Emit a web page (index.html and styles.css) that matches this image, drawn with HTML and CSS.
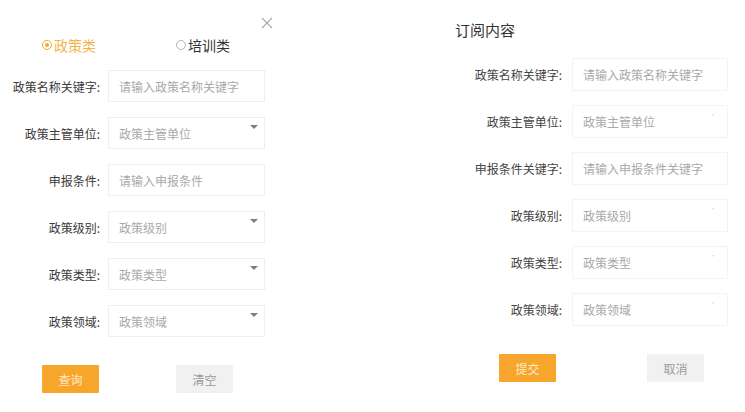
FILE: index.html
```html
<!DOCTYPE html>
<html lang="zh-CN">
<head>
<meta charset="utf-8">
<title>订阅</title>
<link rel="stylesheet" href="styles.css">
</head>
<body>
<div class="page">
  <section class="panel left">
    <span class="close" aria-label="关闭">
      <svg width="12" height="12" viewBox="0 0 12 12"><path d="M1 1L11 11M11 1L1 11" stroke="#a8a8a8" stroke-width="1.1" fill="none"/></svg>
    </span>
    <div class="radios">
      <label class="radio on"><span class="dot"></span>政策类</label>
      <label class="radio"><span class="dot"></span>培训类</label>
    </div>
    <div class="form">
      <div class="row"><span class="lbl">政策名称关键字:</span><div class="field">请输入政策名称关键字</div></div>
      <div class="row"><span class="lbl">政策主管单位:</span><div class="field sel">政策主管单位<i class="arrow"></i></div></div>
      <div class="row"><span class="lbl">申报条件:</span><div class="field">请输入申报条件</div></div>
      <div class="row"><span class="lbl">政策级别:</span><div class="field sel">政策级别<i class="arrow"></i></div></div>
      <div class="row"><span class="lbl">政策类型:</span><div class="field sel">政策类型<i class="arrow"></i></div></div>
      <div class="row"><span class="lbl">政策领域:</span><div class="field sel">政策领域<i class="arrow"></i></div></div>
    </div>
    <div class="btns">
      <button class="btn primary">查询</button>
      <button class="btn plain">清空</button>
    </div>
  </section>

  <section class="panel right">
    <h2 class="title">订阅内容</h2>
    <div class="form">
      <div class="row"><span class="lbl">政策名称关键字:</span><div class="field">请输入政策名称关键字</div></div>
      <div class="row"><span class="lbl">政策主管单位:</span><div class="field sel">政策主管单位<i class="arrow faint"></i></div></div>
      <div class="row"><span class="lbl">申报条件关键字:</span><div class="field">请输入申报条件关键字</div></div>
      <div class="row"><span class="lbl">政策级别:</span><div class="field sel">政策级别<i class="arrow faint"></i></div></div>
      <div class="row"><span class="lbl">政策类型:</span><div class="field sel">政策类型<i class="arrow faint"></i></div></div>
      <div class="row"><span class="lbl">政策领域:</span><div class="field sel">政策领域<i class="arrow faint"></i></div></div>
    </div>
    <div class="btns">
      <button class="btn primary">提交</button>
      <button class="btn plain">取消</button>
    </div>
  </section>
</div>
</body>
</html>
```

FILE: styles.css
```css
* { box-sizing: border-box; }
html, body { margin: 0; padding: 0; background: #fff; }
body {
  font-family: "Noto Sans CJK SC", "Liberation Sans", sans-serif;
  color: #333;
  width: 745px;
  height: 412px;
  overflow: hidden;
}
.page { display: flex; gap: 160px; }

.panel { display: flex; flex-direction: column; flex-shrink: 0; }
.left { width: 280px; padding-top: 35px; position: relative; }
.right { width: 300px; padding-top: 20px; }

.close {
  position: absolute;
  left: 261px;
  top: 17px;
  width: 12px;
  height: 12px;
  line-height: 0;
}

.radios { display: flex; padding-left: 42px; height: 20px; }
.radio {
  flex: 0 0 auto;
  display: flex;
  align-items: center;
  font-size: 14px;
  line-height: 20px;
  color: #333;
  gap: 2px;
}
.radio:first-child { width: 134px; }
.radio .dot {
  flex: 0 0 auto;
  width: 10px;
  height: 10px;
  border-radius: 50%;
  border: 1px solid #b5b5b5;
  position: relative;
}
.radio.on { color: #f6b24a; }
.radio.on .dot { border-color: #f6a833; }
.radio.on .dot::after {
  content: "";
  position: absolute;
  left: 2px; top: 2px;
  width: 4px; height: 4px;
  border-radius: 50%;
  background: #f6a833;
}

.form { display: flex; flex-direction: column; }
.left .form { margin-top: 15px; gap: 15px; }
.right .form { margin-top: 18px; gap: 14px; }

.row { display: flex; align-items: center; }
.lbl {
  flex: 0 0 auto;
  text-align: right;
  font-size: 12px;
  color: #3a3a3a;
  white-space: nowrap;
}
.left .lbl { width: 100px; margin-right: 8px; }
.right .lbl { width: 122px; margin-right: 10px; color: #444; }

.field {
  flex: 0 0 auto;
  position: relative;
  border: 1px solid #efefef;
  font-size: 12px;
  color: #a9a9a9;
  padding-left: 10px;
  display: flex;
  align-items: center;
  white-space: nowrap;
}
.left .field { width: 157px; height: 32px; }
.right .field { width: 156px; height: 33px; border-color: #f3f3f3; }

.arrow {
  position: absolute;
  right: 6px;
  top: 7px;
  width: 0; height: 0;
  border-left: 4px solid transparent;
  border-right: 4px solid transparent;
  border-top: 4px solid #7d7d7d;
}
.arrow.faint {
  right: 12px;
  top: 8px;
  border-left-width: 2px;
  border-right-width: 2px;
  border-top: 2px solid #e6e6e6;
}

.title {
  margin: 0;
  padding-left: 15px;
  font-size: 15px;
  font-weight: normal;
  line-height: 20px;
  color: #333;
}

.btns { display: flex; }
.left .btns { margin-top: 28px; padding-left: 42px; gap: 77px; }
.right .btns { margin-top: 28px; padding-left: 59px; gap: 91px; }

.btn {
  flex: 0 0 auto;
  width: 57px;
  height: 28px;
  border: none;
  border-radius: 1px;
  font-family: inherit;
  font-size: 12px;
  padding: 0;
}
.btn.primary { background: #f8a62b; color: #fde9c9; }
.btn.plain { background: #f1f1f1; color: #9a9a9a; }
```
